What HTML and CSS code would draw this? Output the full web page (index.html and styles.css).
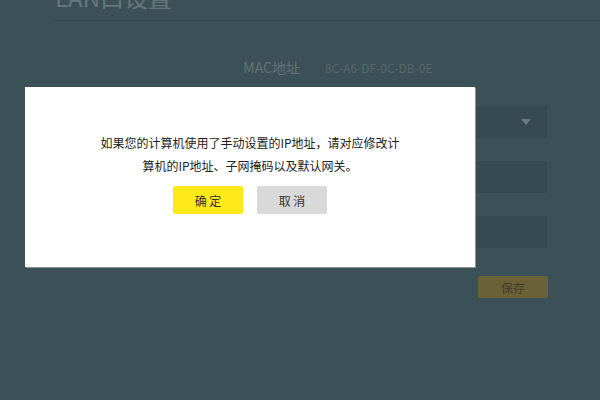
FILE: index.html
```html
<!DOCTYPE html>
<html lang="zh-CN">
<head>
<meta charset="utf-8">
<link rel="stylesheet" href="styles.css">
</head>
<body>
<div class="page">
  <h1 class="title">LAN口设置</h1>
  <div class="form">
    <div class="row mac-row">
      <span class="label">MAC地址</span>
      <span class="value">8C-A6-DF-0C-DB-0E</span>
    </div>
    <div class="row field-row">
      <span class="label"></span>
      <div class="field select"><span class="arrow"></span></div>
    </div>
    <div class="row field-row">
      <span class="label"></span>
      <div class="field"></div>
    </div>
    <div class="row field-row">
      <span class="label"></span>
      <div class="field"></div>
    </div>
    <div class="row save-row">
      <button class="save">保存</button>
    </div>
  </div>
</div>
<div class="modal">
  <p class="msg">如果您的计算机使用了手动设置的IP地址，请对应修改计<br>算机的IP地址、子网掩码以及默认网关。</p>
  <div class="actions">
    <button class="btn ok">确 定</button>
    <button class="btn cancel">取 消</button>
  </div>
</div>
</body>
</html>
```
FILE: styles.css
```css
html, body {
  margin: 0;
  padding: 0;
  width: 600px;
  height: 400px;
  overflow: hidden;
  background: #3c5157;
  font-family: "Noto Sans CJK SC", "Noto Sans", sans-serif;
}
.page {
  padding-left: 55px;
}
.title {
  margin: -20px 0 0 0;
  padding-bottom: 6px;
  font-size: 24px;
  line-height: 34px;
  font-weight: 400;
  color: #66777b;
  border-bottom: 1px solid #30444b;
}
.form {
  display: flex;
  flex-direction: column;
}
.row {
  display: flex;
  align-items: center;
}
.label {
  width: 245px;
  text-align: right;
  font-size: 14px;
  color: #627377;
}
.value {
  margin-left: 25px;
  font-size: 12px;
  color: #56686c;
}
.mac-row {
  height: 20px;
  margin-top: 36px;
}
.field-row {
  margin-top: 29px;
}
.field-row + .field-row {
  margin-top: 23px;
}
.field {
  margin-left: 25px;
  width: 222px;
  height: 32px;
  background: #364a52;
  position: relative;
}
.arrow {
  position: absolute;
  right: 16px;
  top: 13px;
  width: 0;
  height: 0;
  border-left: 5px solid transparent;
  border-right: 5px solid transparent;
  border-top: 6px solid #6b7b80;
}
.save-row {
  margin-top: 28px;
  width: 493px;
  justify-content: flex-end;
}
.save {
  width: 70px;
  height: 22px;
  border: 0;
  border-radius: 2px;
  background: #6a6236;
  color: #3f3f30;
  font-family: inherit;
  font-size: 12px;
  padding: 0;
}
.modal {
  position: absolute;
  left: 25px;
  top: 87px;
  width: 450px;
  height: 180px;
  background: #ffffff;
  box-shadow: 1px 1px 0 #8a9599;
  text-align: center;
}
.msg {
  margin: 44px 0 0 0;
  font-size: 12px;
  line-height: 23px;
  color: #222;
}
.actions {
  margin-top: 9px;
  display: flex;
  justify-content: center;
  gap: 14px;
}
.btn {
  width: 70px;
  height: 28px;
  border: 0;
  border-radius: 2px;
  padding: 0;
  font-family: inherit;
  font-size: 12px;
  color: #333;
}
.ok {
  background: #ffe91a;
}
.cancel {
  background: #d9d9d9;
}
```
